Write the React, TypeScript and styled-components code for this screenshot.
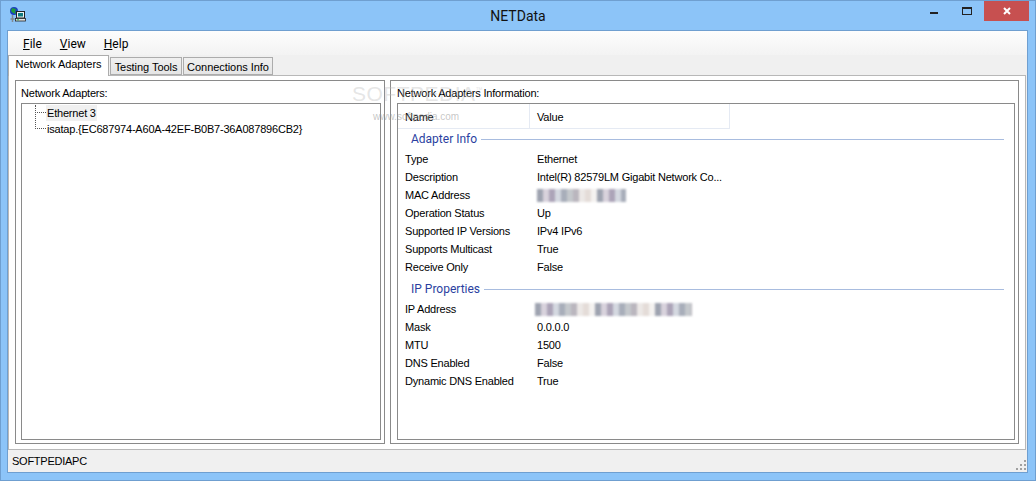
import React from 'react';
import styled, { createGlobalStyle } from 'styled-components';

const GlobalStyle = createGlobalStyle`
  html, body { margin: 0; padding: 0; background: #8cc4f8; }
  body { font-family: "Liberation Sans", Arial, sans-serif; font-size: 11px; letter-spacing: -0.2px; color: #000; }
`;

const Frame = styled.div`
  width: 1036px;
  height: 481px;
  box-sizing: border-box;
  border: 1px solid #6f9fd0;
  background: #8cc4f8;
  display: flex;
  flex-direction: column;
  overflow: hidden;
  position: relative;
`;
const TitleBar = styled.div`
  height: 29px;
  flex: none;
  position: relative;
  display: flex;
  align-items: center;
  justify-content: center;
  font-family: Roboto, sans-serif;
  font-size: 14px;
  letter-spacing: 0;
  color: #111;
`;
const AppIcon = styled.svg`
  position: absolute;
  left: 9px;
  top: 6px;
`;
const WinButtons = styled.div`
  position: absolute;
  top: 0;
  right: 6px;
  display: flex;
  align-items: flex-start;
`;
const WinBtn = styled.div<{ $w: number; $close?: boolean }>`
  width: ${p => p.$w}px;
  height: 20px;
  display: flex;
  align-items: center;
  justify-content: center;
  background: ${p => (p.$close ? '#c75050' : 'transparent')};
`;
const Client = styled.div`
  flex: 1;
  margin: 0 7px 7px 6px;
  border: 1px solid #6f9fd0;
  background: #f0f0f0;
  display: flex;
  flex-direction: column;
  min-height: 0;
`;
const MenuBar = styled.div`
  height: 24px;
  box-sizing: border-box;
  padding: 2px 0 0 15px;
  flex: none;
  display: flex;
  align-items: center;
  gap: 18px;
  font-family: Roboto, sans-serif;
  font-size: 12px;
  letter-spacing: 0;
  background: linear-gradient(#fdfdfd, #f3f3f3);
`;
const Hot = styled.span`
  text-decoration: underline;
`;
const TabStrip = styled.div`
  height: 21px;
  flex: none;
  display: flex;
  align-items: flex-end;
  position: relative;
  z-index: 1;
  margin-bottom: -1px;
`;
const Tab = styled.div<{ $active?: boolean; $w: number }>`
  box-sizing: border-box;
  width: ${p => p.$w}px;
  height: ${p => (p.$active ? 21 : 18)}px;
  margin-bottom: ${p => (p.$active ? 0 : 1)}px;
  margin-right: 1px;
  padding-top: ${p => (p.$active ? 2 : 3)}px;
  text-align: center;
  letter-spacing: -0.05px;
  border: 1px solid #acacac;
  border-bottom: ${p => (p.$active ? 'none' : '1px solid #acacac')};
  background: ${p => (p.$active ? '#fff' : 'linear-gradient(#f0f0f0, #e5e5e5)')};
  white-space: nowrap;
`;
const TabPanel = styled.div`
  flex: 1;
  min-height: 0;
  border: 1px solid #b8b8b8;
  margin-right: 1px;
  background: #fff;
  padding: 4px 6px 5px 6px;
  display: flex;
  gap: 5px;
`;
const Group = styled.div<{ $w?: number; $inset: number }>`
  box-sizing: border-box;
  ${p => (p.$w ? `width: ${p.$w}px; flex: none;` : 'flex: 1;')}
  border: 1px solid #8a8a8a;
  padding: 0 3px 3px ${p => p.$inset}px;
  display: flex;
  flex-direction: column;
`;
const GroupLabel = styled.div`
  height: 22px;
  line-height: 25px;
  flex: none;
  white-space: nowrap;
`;
const InsetBox = styled.div`
  flex: 1;
  min-height: 0;
  border: 1px solid #8a8a8a;
  background: #fff;
  position: relative;
`;
const Tree = styled.div`
  padding-top: 1px;
`;
const TreeRow = styled.div`
  height: 16px;
  line-height: 16px;
  display: flex;
  align-items: center;
  padding-left: 13px;
  white-space: nowrap;
`;
const TreeBranch = styled.span<{ $last?: boolean }>`
  width: 11px;
  height: 8px;
  flex: none;
  align-self: flex-start;
  box-sizing: border-box;
  border-bottom: 1px dotted #555;
  border-left: 1px dotted #555;
  ${p => (p.$last ? 'height: 17px; margin-top: -9px;' : '')}
`;
const TreeLabel = styled.span<{ $selected?: boolean }>`
  padding: 0 1px;
  background: ${p => (p.$selected ? '#f0f0f0' : 'transparent')};
`;
const ListHead = styled.div`
  display: flex;
  height: 25px;
  line-height: 26px;
`;
const HeadCell = styled.div<{ $w: number }>`
  box-sizing: border-box;
  width: ${p => p.$w}px;
  padding-left: 7px;
  border-right: 1px solid #e5eaf3;
  border-bottom: 1px solid #e5eaf3;
`;
const GroupTitle = styled.div`
  display: flex;
  align-items: center;
  height: 18px;
  padding: 0 10px 0 13px;
  gap: 4px;
  font-family: Roboto, sans-serif;
  font-size: 12px;
  letter-spacing: 0;
  color: #2b3f9f;
  &::after {
    content: '';
    flex: 1;
    height: 1px;
    background: #a8bcdf;
  }
`;
const Row = styled.div`
  display: flex;
  height: 18px;
  line-height: 18px;
  white-space: nowrap;
`;
const NameCell = styled.div`
  width: 139px;
  padding-left: 7px;
  box-sizing: border-box;
  flex: none;
`;
const ValueCell = styled.div`
  flex: 1;
  display: flex;
  align-items: center;
`;
const Section = styled.div<{ $gap: number }>`
  margin-top: ${p => p.$gap}px;
`;
const Blurred = styled.span<{ $w: number; $shift: number }>`
  display: block;
  width: ${p => p.$w}px;
  height: 13px;
  margin-left: ${p => p.$shift}px;
  filter: blur(1.2px);
`;
const StatusBar = styled.div`
  height: 22px;
  flex: none;
  display: flex;
  align-items: center;
  padding-left: 4px;
  letter-spacing: -0.25px;
  position: relative;
`;
const Grip = styled.svg`
  position: absolute;
  right: 0;
  bottom: 1px;
`;
const Watermark = styled.div`
  position: absolute;
  left: 351px;
  top: 81px;
  font-size: 21px;
  letter-spacing: 0.5px;
  color: rgba(190, 190, 190, 0.4);
  white-space: nowrap;
  pointer-events: none;
`;
const WatermarkMark = styled.sup`
  font-size: 7px;
  letter-spacing: 0;
  vertical-align: 9px;
  line-height: 0;
`;
const WatermarkUrl = styled.div`
  position: absolute;
  left: 372px;
  top: 110px;
  font-size: 10px;
  letter-spacing: 0;
  color: rgba(150, 150, 150, 0.55);
  pointer-events: none;
`;

const blurColors = ['#d8d2dc', '#a8aeba', '#ece8e6', '#9ea3b0', '#d4d8e0', '#bab6be', '#f4f2f0', '#aca4b8', '#c4c8cc', '#e4dcd8'];
const BlurBar: React.FC<{ width: number; shift?: number }> = ({ width, shift = 0 }) => {
  const stops: string[] = [];
  const cell = 6;
  for (let i = 0; i * cell < width; i++) {
    const c = blurColors[(i * 7 + 3) % blurColors.length];
    stops.push(`${c} ${i * cell}px ${(i + 1) * cell}px`);
  }
  return <Blurred $w={width} $shift={shift} style={{ background: `linear-gradient(90deg, ${stops.join(',')})` }} />;
};

const adapterInfo: [string, React.ReactNode][] = [
  ['Type', 'Ethernet'],
  ['Description', 'Intel(R) 82579LM Gigabit Network Co...'],
  ['MAC Address', <BlurBar width={89} />],
  ['Operation Status', 'Up'],
  ['Supported IP Versions', 'IPv4 IPv6'],
  ['Supports Multicast', 'True'],
  ['Receive Only', 'False'],
];
const ipProps: [string, React.ReactNode][] = [
  ['IP Address', <BlurBar width={157} shift={-2} />],
  ['Mask', '0.0.0.0'],
  ['MTU', '1500'],
  ['DNS Enabled', 'False'],
  ['Dynamic DNS Enabled', 'True'],
];

const App: React.FC = () => (
  <>
    <GlobalStyle />
    <Frame>
      <TitleBar>
        <AppIcon width="18" height="18" viewBox="0 0 18 18">
          <path d="M2.5 8v7M0.5 12h4" stroke="#808890" strokeWidth="1.5" />
          <circle cx="4" cy="4" r="4" fill="#1a3fc0" />
          <path d="M2 1l4 1-1 3 1 2-3-1-2-2z" fill="#1f9a3a" />
          <rect x="6.5" y="4.5" width="8" height="6.5" fill="#f0f4f4" stroke="#222" />
          <rect x="8" y="6" width="5" height="3.5" fill="#0e7a80" />
          <rect x="5.5" y="11.5" width="10" height="2.5" fill="#e4e4e4" stroke="#222" strokeWidth="0.8" />
          <rect x="7" y="12.3" width="2" height="1" fill="#2ab84a" />
        </AppIcon>
        NETData
        <WinButtons>
          <WinBtn $w={30}>
            <svg width="8" height="8" viewBox="0 0 8 8"><rect x="0" y="5" width="8" height="2" fill="#222" /></svg>
          </WinBtn>
          <WinBtn $w={35}>
            <svg width="10" height="8" viewBox="0 0 10 8"><rect x=".5" y=".5" width="9" height="7" fill="none" stroke="#222" /><rect x="0" y="0" width="10" height="2" fill="#222" /></svg>
          </WinBtn>
          <WinBtn $w={45} $close>
            <svg width="8" height="8" viewBox="0 0 8 8"><path d="M1 1l6 6M7 1l-6 6" stroke="#fff" strokeWidth="2" /></svg>
          </WinBtn>
        </WinButtons>
      </TitleBar>
      <Client>
        <MenuBar>
          <span><Hot>F</Hot>ile</span>
          <span><Hot>V</Hot>iew</span>
          <span><Hot>H</Hot>elp</span>
        </MenuBar>
        <TabStrip>
          <Tab $active $w={101}>Network Adapters</Tab>
          <Tab $w={72}>Testing Tools</Tab>
          <Tab $w={90}>Connections Info</Tab>
        </TabStrip>
        <TabPanel>
          <Group $w={370} $inset={5}>
            <GroupLabel>Network Adapters:</GroupLabel>
            <InsetBox>
              <Tree>
                <TreeRow><TreeBranch /><TreeLabel $selected>Ethernet 3</TreeLabel></TreeRow>
                <TreeRow><TreeBranch $last /><TreeLabel>isatap.{'{'}EC687974-A60A-42EF-B0B7-36A087896CB2{'}'}</TreeLabel></TreeRow>
              </Tree>
            </InsetBox>
          </Group>
          <Group $inset={6}>
            <GroupLabel>Network Adapters Information:</GroupLabel>
            <InsetBox>
              <ListHead>
                <HeadCell $w={132}>Name</HeadCell>
                <HeadCell $w={200}>Value</HeadCell>
              </ListHead>
              <Section $gap={1}><GroupTitle>Adapter Info</GroupTitle></Section>
              <Section $gap={2}>
                {adapterInfo.map(([n, v]) => (
                  <Row key={n}><NameCell>{n}</NameCell><ValueCell>{v}</ValueCell></Row>
                ))}
              </Section>
              <Section $gap={4}><GroupTitle>IP Properties</GroupTitle></Section>
              <Section $gap={2}>
                {ipProps.map(([n, v]) => (
                  <Row key={n}><NameCell>{n}</NameCell><ValueCell>{v}</ValueCell></Row>
                ))}
              </Section>
            </InsetBox>
          </Group>
        </TabPanel>
        <StatusBar>
          SOFTPEDIAPC
          <Grip width="12" height="12" viewBox="0 0 12 12" fill="#a0a0a0">
            <rect x="9" y="1" width="2" height="2" />
            <rect x="5" y="5" width="2" height="2" />
            <rect x="9" y="5" width="2" height="2" />
            <rect x="1" y="9" width="2" height="2" />
            <rect x="5" y="9" width="2" height="2" />
            <rect x="9" y="9" width="2" height="2" />
          </Grip>
        </StatusBar>
      </Client>
      <Watermark>SOFTPEDIA<WatermarkMark>™</WatermarkMark></Watermark>
      <WatermarkUrl>www.softpedia.com</WatermarkUrl>
    </Frame>
  </>
);

export default App;
